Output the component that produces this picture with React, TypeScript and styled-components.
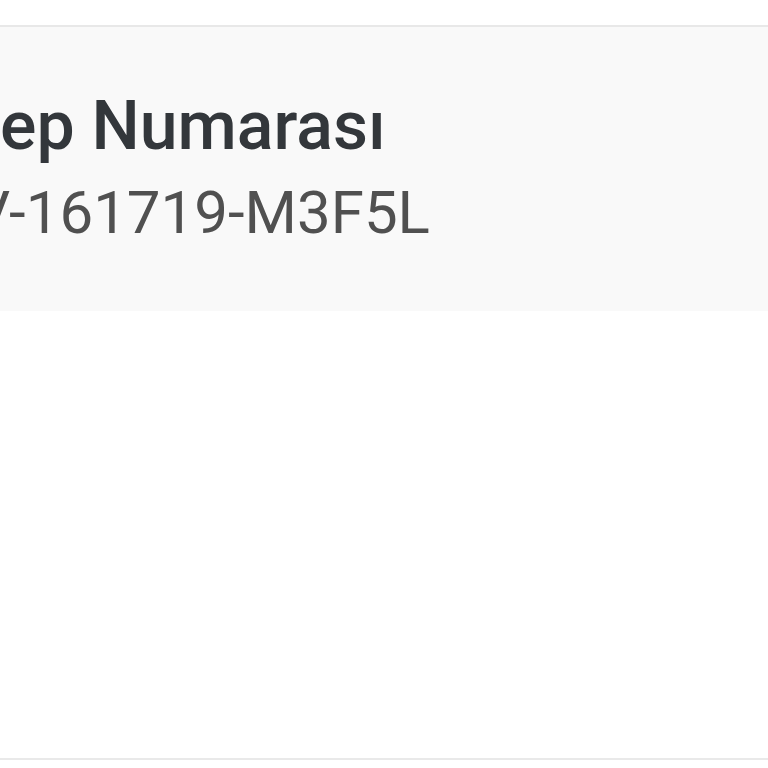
import styled, { createGlobalStyle } from 'styled-components'

const GlobalStyle = createGlobalStyle`
    html, body {
        margin: 0;
        padding: 0;
        background: #ffffff;
        overflow: hidden;
    }
    body {
        font-family: Roboto, "Liberation Sans", Arial, sans-serif;
    }
`

const Page = styled.div`
    width: 768px;
    height: 768px;
    padding-top: 25px;
    box-sizing: border-box;
    overflow: hidden;
`

const Card = styled.section`
    border-top: 2px solid #e8e8e8;
    border-bottom: 2px solid #e9e9e9;
    height: 735px;
    box-sizing: border-box;
    display: flex;
    flex-direction: column;
    background: #ffffff;
`

const InfoBlock = styled.div`
    background: #f9f9f9;
    height: 284px;
    box-sizing: border-box;
    padding: 59px 0 0 0;
    display: flex;
    flex-direction: column;
    gap: 9px;
`

const Label = styled.div`
    font-size: 68px;
    line-height: 1.2;
    font-weight: 500;
    color: #33373b;
    white-space: nowrap;
`

const Value = styled.div<{ $shift: number }>`
    font-size: 60px;
    line-height: 1.2;
    font-weight: 400;
    color: #505050;
    white-space: nowrap;
    margin-left: ${props => props.$shift}px;
`

const App = () => {
    return (
        <>
            <GlobalStyle />
            <Page>
                <Card>
                    <InfoBlock>
                        <Label>ep Numarası</Label>
                        <Value $shift={-28}>V-161719-M3F5L</Value>
                    </InfoBlock>
                </Card>
            </Page>
        </>
    )
}

export default App
